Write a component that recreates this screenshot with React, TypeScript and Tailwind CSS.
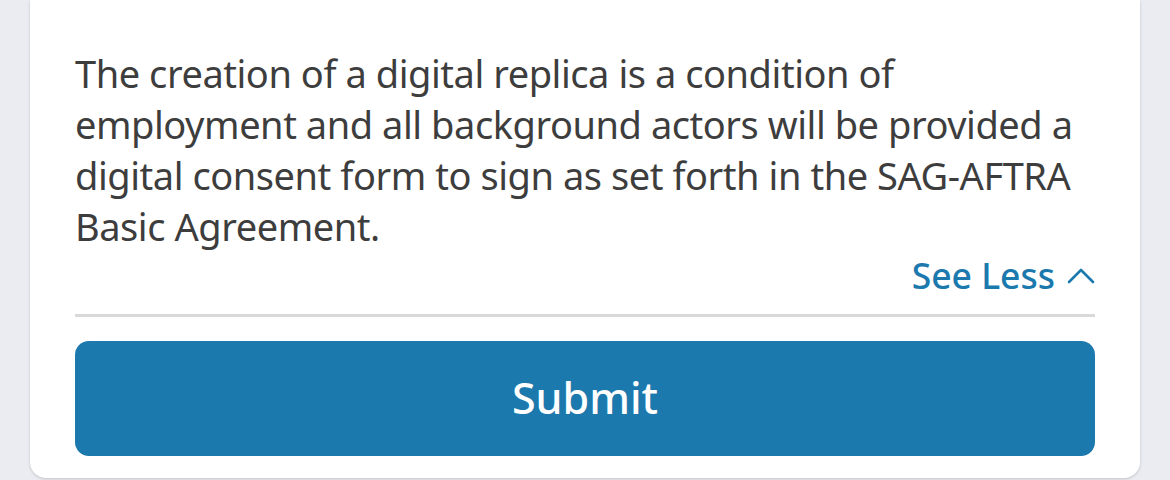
import React from "react";

const ChevronUp = () => (
  <svg width="28" height="18" viewBox="0 0 28 18" fill="none" className="ml-3">
    <path d="M2 16 L14 4 L26 16" stroke="#1b79ae" strokeWidth="2.6" strokeLinecap="round" strokeLinejoin="round" />
  </svg>
);

export default function App() {
  return (
    <div className="w-[1170px] h-[480px] bg-[#ebecf1] px-[30px] overflow-hidden font-['Noto_Sans',sans-serif]">
      <div className="bg-white rounded-b-[16px] shadow-[0_1px_3px_rgba(0,0,0,0.18)] px-[45px] pt-[48px] pb-[22px]">
        <p className="text-[38px] leading-[51px] text-[#3d3d3d] tracking-[-0.45px]">
          The creation of a digital replica is a condition of employment and all background actors will be provided a
          digital consent form to sign as set forth in the SAG-AFTRA Basic Agreement.
        </p>
        <div className="flex justify-end items-center mt-[1px]">
          <button className="flex items-center text-[35.5px] leading-[44px] font-medium text-[#1b79ae]">
            See Less
            <ChevronUp />
          </button>
        </div>
        <div className="h-[3px] bg-[#d9d9d9] mt-[17px]" />
        <button className="w-full h-[115px] mt-[24px] rounded-[14px] bg-[#1c79ae] text-white text-[43px] font-medium">
          Submit
        </button>
      </div>
    </div>
  );
}
